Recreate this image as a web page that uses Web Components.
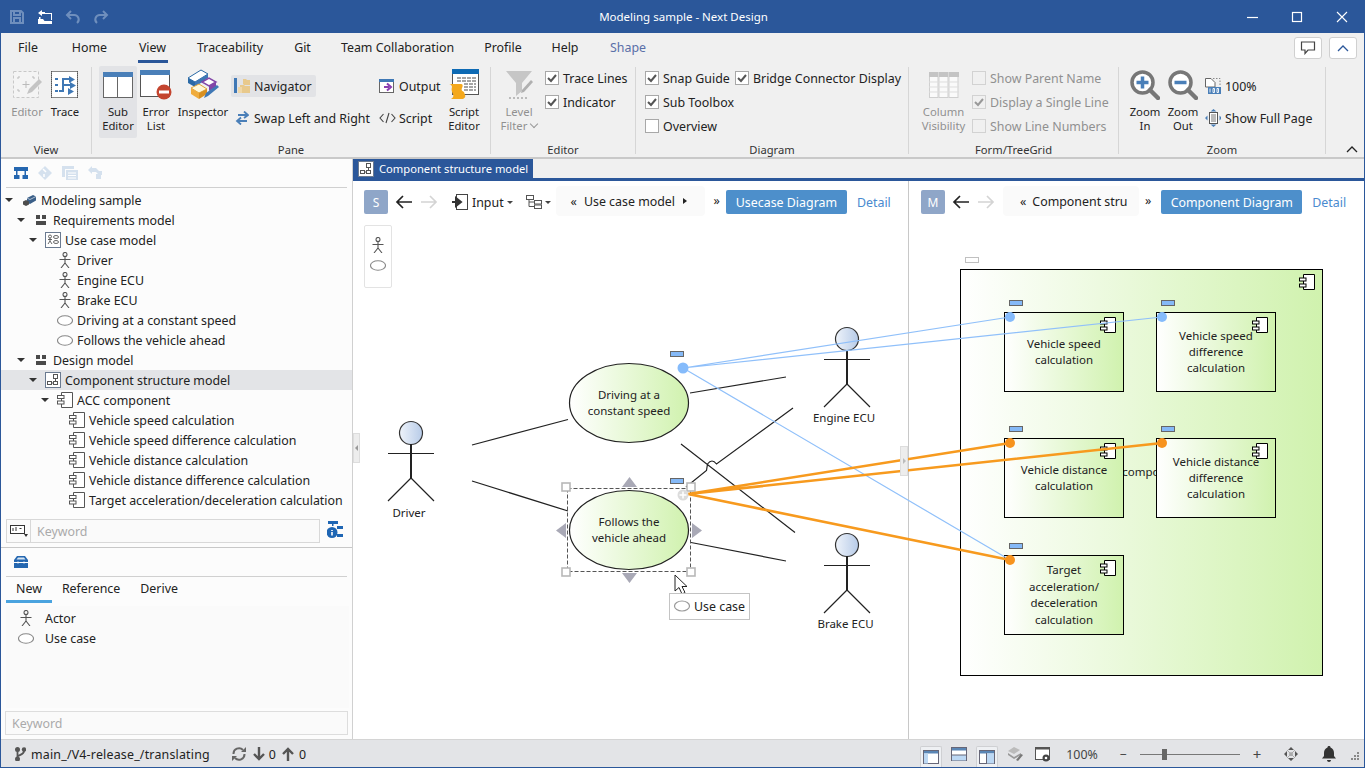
<!DOCTYPE html>
<html lang="en"><head><meta charset="utf-8"><title>Modeling sample - Next Design</title>
<style>
html,body{margin:0;padding:0;background:#fff;overflow:hidden}
body{font:12.4px "Noto Sans","Liberation Sans",sans-serif;color:#222}
</style></head><body>
<app-window>
  <title-bar slot="title">Modeling sample - Next Design</title-bar>
  <ribbon-bar slot="ribbon">
    <rb-group w="91" pl="7" label="View">
      <rb-large w="38" icon="editor" off>Editor</rb-large>
      <rb-large w="38" icon="trace">Trace</rb-large>
    </rb-group>
    <rb-group w="399" pl="7" label="Pane">
      <rb-large w="38" icon="subeditor" on>Sub<br>Editor</rb-large>
      <rb-large w="38" icon="errorlist">Error<br>List</rb-large>
      <rb-large w="56" icon="inspector">Inspector</rb-large>
      <rb-col w="145"><rb-small icon="navigator" on>Navigator</rb-small><rb-small icon="swap">Swap Left and Right</rb-small></rb-col>
      <rb-col w="68"><rb-small icon="output">Output</rb-small><rb-small icon="script">Script</rb-small></rb-col>
      <rb-large w="40" icon="scripteditor">Script<br>Editor</rb-large>
    </rb-group>
    <rb-group w="145" pl="9" label="Editor">
      <rb-large w="38" icon="filter" off caret>Level<br>Filter</rb-large>
      <rb-checks cols="auto" ml="7"><rb-check checked>Trace Lines</rb-check><rb-check checked>Indicator</rb-check></rb-checks>
    </rb-group>
    <rb-group w="273" pl="9" label="Diagram">
      <rb-checks cols="90px auto"><rb-check checked>Snap Guide</rb-check><rb-check checked>Bridge Connector Display</rb-check><rb-check checked>Sub Toolbox</rb-check><span></span><rb-check>Overview</rb-check></rb-checks>
    </rb-group>
    <rb-group w="210" pl="6" label="Form/TreeGrid">
      <rb-large w="57" icon="columns" off>Column<br>Visibility</rb-large>
      <rb-checks cols="auto"><rb-check off>Show Parent Name</rb-check><rb-check off checked>Display a Single Line</rb-check><rb-check off>Show Line Numbers</rb-check></rb-checks>
    </rb-group>
    <rb-group w="207" pl="7" label="Zoom">
      <rb-large w="38" icon="zoomin">Zoom<br>In</rb-large>
      <rb-large w="38" icon="zoomout">Zoom<br>Out</rb-large>
      <rb-col w="120"><rb-small icon="page100">100%</rb-small><rb-small icon="fullpage">Show Full Page</rb-small></rb-col>
    </rb-group>
  </ribbon-bar>
  <nav-panel slot="left">
    <tree-row slot="tree" d="0" icon="project" arrow>Modeling sample</tree-row>
    <tree-row slot="tree" d="1" icon="package" arrow>Requirements model</tree-row>
    <tree-row slot="tree" d="2" icon="ucmodel" arrow>Use case model</tree-row>
    <tree-row slot="tree" d="3" icon="actor">Driver</tree-row>
    <tree-row slot="tree" d="3" icon="actor">Engine ECU</tree-row>
    <tree-row slot="tree" d="3" icon="actor">Brake ECU</tree-row>
    <tree-row slot="tree" d="3" icon="oval">Driving at a constant speed</tree-row>
    <tree-row slot="tree" d="3" icon="oval">Follows the vehicle ahead</tree-row>
    <tree-row slot="tree" d="1" icon="package" arrow>Design model</tree-row>
    <tree-row slot="tree" d="2" icon="cmodel" arrow selected>Component structure model</tree-row>
    <tree-row slot="tree" d="3" icon="comp" arrow>ACC component</tree-row>
    <tree-row slot="tree" d="4" icon="comp">Vehicle speed calculation</tree-row>
    <tree-row slot="tree" d="4" icon="comp">Vehicle speed difference calculation</tree-row>
    <tree-row slot="tree" d="4" icon="comp">Vehicle distance calculation</tree-row>
    <tree-row slot="tree" d="4" icon="comp">Vehicle distance difference calculation</tree-row>
    <tree-row slot="tree" d="4" icon="comp">Target acceleration/deceleration calculation</tree-row>
  </nav-panel>
  <editor-area slot="main"></editor-area>
  <status-bar slot="status"></status-bar>
</app-window>
<script>
const ICONS={
save:[16,16,'<g fill="none" stroke="#6f8fbd" stroke-width="2"><path d="M2 2h10l2 2v10H2z"/><path d="M5 2v4h6V2M5 14V9h6v5"/></g>'],
open:[16,16,'<g fill="#fff"><path d="M1 10h5l1.500 2H15v3H1z"/><path d="M8 4h7v7h-1V5H8z"/><path d="M1 4l4-3v2h3v2H5v2z"/><rect x="2" y="8" width="1.500" height="2"/></g>'],
undo:[16,16,'<path d="M6 2L2 6l4 4M2 6h7a4.500 4.500 0 0 1 3 8" fill="none" stroke="#6f8fbd" stroke-width="2"/>'],
redo:[16,16,'<path d="M10 2l4 4-4 4M14 6H7a4.500 4.500 0 0 0-3 8" fill="none" stroke="#6f8fbd" stroke-width="2"/>'],
min:[12,12,'<path d="M1 6.500h11" stroke="#fff" stroke-width="1.200"/>'],
max:[12,12,'<rect x="1.500" y="1.500" width="9" height="9" fill="none" stroke="#fff" stroke-width="1.200"/>'],
close:[12,12,'<path d="M1 1l10 10M11 1L1 11" stroke="#fff" stroke-width="1.100"/>'],
editor:[30,30,'<rect x="1.500" y="1.500" width="25" height="26" fill="#f4f4f4" stroke="#c8c8c8" stroke-dasharray="3 2"/><path d="M8 7H6v2M20 7h2v2M8 21H6v-2M14 11v7M10.500 14.500h7" fill="none" stroke="#bbb"/><path d="M15 24l2-5L27 9l3 3-10 10z" fill="#c4c4c4"/>'],
trace:[28,28,'<rect x=".5" y=".5" width="26" height="26" fill="#fff" stroke="#888"/><path d="M.5 0v27M26.500 0v27" stroke="#555" stroke-dasharray="1 1"/><g fill="none" stroke="#3f78b5" stroke-width="2" stroke-dasharray="3 1"><path d="M4 8h3M4 14h3M4 20h3"/></g><g fill="none" stroke="#3f78b5" stroke-width="2"><path d="M8 20h4V8h6M12 14h7"/></g><path d="M18 5l6 3.500-6 3.500zM19 11l6 3.500-6 3.500zM17 17l6 3.500-6 3.500z" fill="#3f78b5"/>'],
subeditor:[30,26,'<rect x=".5" y=".5" width="29" height="25" fill="#fff" stroke="#666"/><rect width="30" height="5" fill="#4a7fb8"/><path d="M14.500 5v20" stroke="#666"/>'],
errorlist:[32,30,'<rect x=".5" y=".5" width="29" height="26" fill="#fff" stroke="#555"/><rect width="30" height="5" fill="#4a7fb8"/><circle cx="24" cy="22" r="7.500" fill="#c4452f"/><rect x="19" y="20.500" width="10" height="3" fill="#fff"/>'],
inspector:[32,32,'<path d="M1 9L14 1l7 4L8 13z" fill="#fff" stroke="#2b6aa6"/><path d="M1 9l7 4v5L1 14z" fill="#2b6aa6"/><path d="M8 13L21 5v4L8 18z" fill="#3f78b5"/><path d="M15 13l7-4 7 4-7 4z" fill="#fff" stroke="#8246a8" stroke-width="1.500"/><path d="M22 17l7-4v5l-7 4z" fill="#8246a8"/><path d="M4 19l8-4 8 5-8 4z" fill="#fff8d8" stroke="#e0a53a"/><path d="M4 19v6l8 5v-6z" fill="#f0ac3c"/><path d="M12 24l8-4v5l-8 5z" fill="#d99020"/><path d="M17 29l2-5 11-8 2 2-11 9z" fill="#3f78b5"/>'],
navigator:[16,18,'<rect x="0" y="1" width="3" height="15" fill="#3f78b5"/><path d="M6 8h4l1 1h5v7H6z" fill="#e8c98c"/><path d="M9 2h3l1 1h3v5h-6l-1-1z" fill="#e8c98c"/><path d="M4 10h4v6H4z" fill="#f0d8a8"/>'],
swap:[14,14,'<path d="M2 5h9M8 1.500L12 5 8 8" fill="none" stroke="#4a7fb8" stroke-width="1.800" transform="translate(1 -1)"/><path d="M12 10H3M6 6.500L2 10l4 3.500" fill="none" stroke="#4a7fb8" stroke-width="1.800"/>'],
output:[16,14,'<rect x=".5" y=".5" width="14" height="13" fill="#fff" stroke="#666"/><rect width="15" height="3" fill="#3f78b5"/><path d="M5 8h5M8 4.500L12 8l-4 3.500" fill="none" stroke="#8a3fb0" stroke-width="2"/>'],
script:[17,12,'<path d="M4.500 2L1 6l3.500 4M12.500 2L16 6l-3.500 4M10 1L7 11" fill="none" stroke="#444" stroke-width="1.100"/>'],
scripteditor:[32,32,'<rect x="4.500" y=".5" width="26" height="25" fill="#fff" stroke="#555"/><rect x="4" width="27" height="5" fill="#0e6ab4"/><g stroke="#888" stroke-width="1.500" stroke-dasharray="4 1"><path d="M9 9h19M9 12h19M16 15h12M16 18h12M16 21h12"/></g><path d="M1 15h12c2 0 2 2 1 4s0 3 2 4l1 3c1 2-1 4-3 4H3c2-1 3-3 2-5s-2-4-1-7c0-1-1-3-3-3z" fill="#f4a81c"/>'],
filter:[28,30,'<path d="M1 1h26L17 13v8l-6 5V13z" fill="#c6c6c6"/><path d="M17 20l9-10 2 2-9 10-3 1z" fill="#b0b0b0"/><path d="M4 28h18" stroke="#bbb" stroke-dasharray="2 2" stroke-width="2"/>'],
columns:[30,26,'<g fill="#fafafa" stroke="#cfcfcf"><rect x=".5" y=".5" width="8.500" height="25"/><rect x="10" y=".5" width="9" height="25"/><rect x="20" y=".5" width="9" height="25"/></g><g fill="#c4c4c4"><rect width="9" height="5"/><rect x="10" width="9" height="5"/><rect x="20" width="10" height="5"/></g><path d="M0 10h30M0 15h30M0 20h30" stroke="#ddd"/>'],
zoomin:[30,30,'<circle cx="12.500" cy="12.500" r="10.500" fill="#fff" stroke="#777" stroke-width="3.500"/><path d="M20 20l8 8" stroke="#777" stroke-width="4.500" stroke-linecap="round"/><path d="M6.500 12.500h12M12.500 6.500v12" stroke="#4a7fb8" stroke-width="3.500"/>'],
zoomout:[30,30,'<circle cx="12.500" cy="12.500" r="10.500" fill="#fff" stroke="#777" stroke-width="3.500"/><path d="M20 20l8 8" stroke="#777" stroke-width="4.500" stroke-linecap="round"/><path d="M6.500 12.500h12" stroke="#4a7fb8" stroke-width="3.500"/>'],
page100:[16,16,'<path d="M.5.500H6l4 4V9H.5z" fill="#fff" stroke="#666"/><path d="M8 .5h7v8" fill="none" stroke="#888" stroke-dasharray="1.500 1.500"/><rect x="3" y="9" width="13" height="7" fill="#4a7fb8"/><path d="M5 10.500v4M8 10.500h1.500v4H8zM12 10.500h1.500v4H12z" fill="none" stroke="#fff" stroke-width=".9"/>'],
fullpage:[16,18,'<rect x="4.500" y="3.500" width="8" height="11" fill="#fff" stroke="#555"/><path d="M6 6h5M6 8h5M6 10h5M6 12h5" stroke="#777"/><g fill="#4a7fb8"><path d="M8.500 0l3 2.500h-6zM8.500 18l3-2.500h-6zM0 9l2.500-2.500v5zM17 9l-2.500-2.500v5z"/></g>'],
navtree:[14,12,'<g fill="#2567b0"><rect width="14" height="4"/><rect y="8" width="5.500" height="4"/><rect x="8.500" y="8" width="5.500" height="4"/><path d="M2 3h1.500v6H2zM10.500 3H12v6h-1.500z"/></g>'],
navdiamond:[14,14,'<path d="M7 0l7 7-7 7-7-7z" fill="#d5e1ee"/><path d="M5 3l3 3M6 8v3" stroke="#fff" stroke-width="1.500"/>'],
navdocs:[16,14,'<path d="M0 0h12v3H3v8H0z" fill="#d5e1ee"/><rect x="4" y="4" width="12" height="10" fill="#d5e1ee"/><path d="M6 7h8M6 9.500h8M6 12h8" stroke="#fff"/>'],
navarrows:[14,14,'<path d="M0 4l4-4v2h4l3 3h3v4l-3 0-3-3H4v2z" fill="#d5e1ee"/><rect x="8" y="8" width="5" height="5" fill="#d5e1ee"/>'],
project:[14,11,'<path d="M5 3l6-3 3 1.500v4L8 9 5 7.500z" fill="#3a5f88"/><path d="M5 3l3 1.500 6-3" fill="none" stroke="#fff" stroke-width=".6"/><path d="M1 6.500l3-1.500 3 1.500v3L4 11 1 9.500z" fill="#4d4d4d"/>'],
package:[10,10,'<g fill="#4a4a4a"><rect width="4" height="4"/><rect x="6" width="4" height="4"/><rect y="6" width="10" height="4"/></g>'],
ucmodel:[16,16,'<rect x=".5" y=".5" width="15" height="15" fill="#fff" stroke="#6a7a90"/><g fill="none" stroke="#555" stroke-width=".9"><circle cx="5" cy="4.500" r="1.500"/><path d="M5 6v3M3 7.500h4M5 9l-2 3M5 9l2 3"/><ellipse cx="11" cy="5" rx="2.500" ry="1.500"/><ellipse cx="11" cy="10" rx="2.500" ry="1.500"/></g>'],
cmodel:[16,16,'<rect x=".5" y=".5" width="15" height="15" fill="#fff" stroke="#6a7a90"/><g fill="#fff" stroke="#555"><rect x="8.500" y="2.500" width="4" height="4"/><rect x="2.500" y="9.500" width="4" height="3"/><rect x="8.500" y="9.500" width="4" height="3"/><path d="M10.500 6.500v3M6.500 11h2" fill="none"/></g>'],
actor:[12,16,'<g fill="none" stroke="#555" stroke-width="1.100"><circle cx="6" cy="2.500" r="2"/><path d="M6 4.500v6.500M.5 7.500h11M6 11l-4 5M6 11l4 5"/></g>'],
oval:[16,11,'<ellipse cx="8" cy="5.500" rx="7.500" ry="4.800" fill="#fff" stroke="#888" stroke-width="1.100"/>'],
comp:[16,16,'<path d="M4.500 .5h11v15h-11z" fill="#fff" stroke="#555"/><rect x=".5" y="3.500" width="6.500" height="3" fill="#fff" stroke="#555"/><rect x=".5" y="9" width="6.500" height="3" fill="#fff" stroke="#555"/>'],
abc:[18,12,'<rect x=".5" y=".5" width="14" height="8" fill="#fff" stroke="#333"/><path d="M14 9h4l-2 3z" fill="#333"/><path d="M3 3v3M6 2v4M9.500 3.500h2" stroke="#333"/>'],
infotree:[16,17,'<g fill="#1f66b4"><rect x="1" width="10" height="3"/><rect x="5" y="2" width="1.500" height="3"/><circle cx="5" cy="11.500" r="5.500"/><rect x="10" y="5" width="6" height="3"/><rect x="10" y="13" width="6" height="3"/></g><path d="M5 9v1M5 11v3.500" stroke="#fff" stroke-width="1.600"/>'],
toolbox:[14,12,'<path d="M3 0h8l3 4v8H0V4z" fill="#2567b0"/><path d="M4 1.500h6l1.500 2h-9z" fill="#d6e5f3"/><path d="M0 6.500h14" stroke="#fff"/><path d="M4 5.500v2M10 5.500v2" stroke="#fff"/>'],
inputic:[16,16,'<rect x="4.500" y=".5" width="11" height="15" fill="#fff" stroke="#444"/><path d="M0 8h5M4 4l5 4-5 4z" fill="#333" stroke="#333" stroke-width="2"/>'],
treeic:[16,14,'<g fill="#fff" stroke="#555"><rect x=".5" y=".5" width="7" height="4"/><rect x="8.500" y="5.500" width="7" height="3.500"/><rect x="8.500" y="10" width="7" height="3.500"/><path d="M3 4.500v7h5M3 7h5" fill="none"/></g>'],
arrowL:[18,14,'<path d="M17 7H2M8 1L2 7l6 6" fill="none" stroke="#222" stroke-width="1.700"/>'],
arrowR:[18,14,'<path d="M1 7h15M10 1l6 6-6 6" fill="none" stroke="#d4d4d4" stroke-width="1.700"/>'],
branch:[11,14,'<g fill="#555"><circle cx="2.500" cy="2.500" r="2.500"/><circle cx="2.500" cy="12" r="2.500"/><circle cx="9" cy="2.500" r="2.200"/></g><path d="M2.500 3v8M9 4c0 3-3 3.500-6 5" fill="none" stroke="#555" stroke-width="1.800"/>'],
sync:[14,14,'<g fill="none" stroke="#666" stroke-width="2"><path d="M1.500 7A5.500 5.500 0 0 1 11 3"/><path d="M12.500 7A5.500 5.500 0 0 1 3 11"/></g><path d="M14 0v5H9zM0 14V9h5z" fill="#666"/>'],
down:[12,14,'<path d="M6 0v12M1 7l5 5 5-5" fill="none" stroke="#555" stroke-width="2.400"/>'],
up:[12,14,'<path d="M6 14V2M1 7l5-5 5 5" fill="none" stroke="#555" stroke-width="2.400"/>'],
layA:[16,14,'<rect x=".5" y=".5" width="15" height="13" fill="#fff" stroke="#667"/><rect x="1" y="1" width="14" height="2.500" fill="#5a86b5"/><rect x="1" y="3.500" width="4" height="10" fill="#bcd8f4"/>'],
layB:[16,14,'<rect x=".5" y=".5" width="15" height="13" fill="#fff" stroke="#667"/><rect x="1" y="1" width="14" height="2.500" fill="#5a86b5"/><rect x="1" y="8" width="14" height="5.500" fill="#bcd8f4"/><path d="M1 8h14" stroke="#667"/>'],
layC:[16,14,'<rect x=".5" y=".5" width="15" height="13" fill="#fff" stroke="#667"/><rect x="1" y="1" width="14" height="2.500" fill="#5a86b5"/><rect x="8" y="3.500" width="7" height="10" fill="#bcd8f4"/><path d="M7.500 3v10" stroke="#667"/>'],
insSm:[16,16,'<path d="M1 5l6-4 6 3-6 4z" fill="#bbb"/><path d="M1 7l6 4 7-4v2l-7 4-6-4z" fill="#999"/><path d="M9 14l5-6 2 1-5 6z" fill="#777"/>'],
settingsSm:[16,15,'<rect x=".5" y=".5" width="14" height="12" fill="#fff" stroke="#555"/><rect width="15" height="2.500" fill="#555"/><circle cx="11" cy="11" r="3.500" fill="#444"/><circle cx="11" cy="11" r="1.300" fill="#fff"/>'],
moveic:[14,14,'<g fill="#555"><path d="M7 0l3 3H4zM7 14l3-3H4zM0 7l3-3v6zM14 7l-3-3v6z"/><circle cx="7" cy="7" r="1.500"/></g><path d="M3 3l8 8M11 3l-8 8" stroke="#aaa"/>'],
bell:[14,16,'<path d="M7 0c1 0 1.500.5 1.500 1.500C11 2.500 12 4.500 12 7v3l2 2.500H0L2 10V7c0-2.500 1-4.500 3.500-5.500C5.500.5 6 0 7 0z" fill="#333"/><path d="M5 14h4c0 1-1 2-2 2s-2-1-2-2z" fill="#333"/>'],
grip:[10,10,'<g fill="#888"><rect x="7" width="2" height="2"/><rect x="4" y="3" width="2" height="2"/><rect x="7" y="3" width="2" height="2"/><rect x="1" y="6" width="2" height="2"/><rect x="4" y="6" width="2" height="2"/><rect x="7" y="6" width="2" height="2"/></g>'],
chat:[16,14,'<path d="M1.500 1h13v8H8l-3 3.500V9H1.500z" fill="#fff" stroke="#444" stroke-width="1.200"/>'],
chevUp:[12,7,'<path d="M1 6l5-5 5 5" fill="none" stroke="#2b579a" stroke-width="1.300"/>'],
chevUpK:[12,7,'<path d="M1 6l5-5 5 5" fill="none" stroke="#222" stroke-width="1.300"/>']
};
const H=(n,c)=>customElements.define(n,c);
class Base extends HTMLElement{
  render(html){const s=this.shadowRoot||this.attachShadow({mode:'open'});s.innerHTML=html;return s}
  attr(n,d){return this.hasAttribute(n)?this.getAttribute(n):d}
}
const ic=(n,extra='')=>`<x-ic n="${n}" style="${extra}"></x-ic>`;
H('x-ic',class extends Base{connectedCallback(){
  const [w,h,b]=ICONS[this.getAttribute('n')];
  this.render(`<style>:host{display:inline-flex;flex:none;width:${w}px;height:${h}px}svg{display:block}</style><svg xmlns="http://www.w3.org/2000/svg" width="${w}" height="${h}" viewBox="0 0 ${w} ${h}">${b}</svg>`);
}});
H('app-window',class extends Base{connectedCallback(){this.render(`<style>
:host{display:flex;flex-direction:column;width:1365px;height:768px;box-sizing:border-box;border:1px solid #2b579a;border-top:0;background:#fff;position:relative;overflow:hidden}
.main{flex:1;display:flex;min-height:0}
</style><slot name="title"></slot><slot name="ribbon"></slot><div class="main"><slot name="left"></slot><slot name="main"></slot></div><slot name="status"></slot>`)}});
H('title-bar',class extends Base{connectedCallback(){this.render(`<style>
:host{display:grid;grid-template-columns:1fr auto 1fr;align-items:center;height:33px;background:#2b579a;color:#fff;font-size:11.5px;margin:0 -1px}
.l{display:flex;align-items:center;padding-left:9px;padding-top:1px}.l x-ic{margin-right:12px}
.r{display:flex;justify-content:flex-end;align-items:center;padding-right:17px}.r x-ic{margin-left:33px}
.t{padding-top:0;margin-left:2px}
</style><div class="l">${ic('save')}${ic('open')}${ic('undo')}${ic('redo')}</div><div class="t"><slot></slot></div><div class="r">${ic('min')}${ic('max')}${ic('close')}</div>`)}});
H('ribbon-bar',class extends Base{connectedCallback(){
const tabs=[['File',54],['Home',69],['View',57,1],['Traceability',98],['Git',47],['Team Collaboration',143],['Profile',68],['Help',56],['Shape',70,2]];
this.render(`<style>
:host{display:block;height:126px;box-sizing:border-box;background:#f0f0f0;border-bottom:2px solid #c9c9c9;position:relative;color:#222}
.tabs{display:flex;height:33px}
.tab{display:flex;flex-direction:column;align-items:center;height:33px;line-height:29px;box-sizing:border-box;position:relative}
.tab i{position:absolute;left:50%;margin-left:-15px;width:30px;top:27px;height:3px;background:#2b579a}
.tab.s{color:#5a6fa8}
.groups{display:flex;height:92px}
.fb{position:absolute;top:4px;right:7px;display:flex;gap:7px}
.fb span{display:flex;align-items:center;justify-content:center;width:26px;height:20px;background:#fff;border:1px solid #d0d0d0;border-radius:3px}
.col{position:absolute;right:6px;bottom:4px;display:flex}
</style><div class="tabs">${tabs.map(t=>`<div class="tab ${t[2]==2?'s':''}" style="width:${t[1]}px">${t[0]}${t[2]==1?'<i></i>':''}</div>`).join('')}</div>
<div class="groups"><slot></slot></div>
<div class="fb"><span>${ic('chat')}</span><span>${ic('chevUp')}</span></div><div class="col">${ic('chevUpK')}</div>`)}});
H('rb-group',class extends Base{connectedCallback(){this.render(`<style>
:host{display:flex;flex-direction:column;flex:none;box-sizing:border-box;width:${this.attr('w')}px;height:87px;margin-top:1px;border-right:1px solid #d6d6d6;padding-left:${this.attr('pl')}px}
.c{display:flex;flex:1;margin-top:-1px}
.l{height:14px;line-height:14px;margin:0 0 -3px -${this.attr('pl')}px;text-align:center;font-size:11.2px;color:#333}
</style><div class="c"><slot></slot></div><div class="l">${this.attr('label')}</div>`)}});
H('rb-large',class extends Base{connectedCallback(){const off=this.hasAttribute('off'),on=this.hasAttribute('on'),cr=this.hasAttribute('caret');this.render(`<style>
:host{display:flex;flex-direction:column;align-items:center;flex:none;width:${this.attr('w')}px;height:72px;box-sizing:border-box;border-radius:2px;${on?'background:#e2e3e6;':''}${off?'color:#909090;':''}font-size:11.3px}
.i{height:39px;display:flex;align-items:center;justify-content:center;padding-bottom:1px;box-sizing:border-box}
.t{line-height:14px;text-align:center;white-space:nowrap}
.cr{display:inline-block;width:5px;height:5px;border:solid #999;border-width:0 1px 1px 0;transform:rotate(45deg);margin:0 0 3px 4px}
</style><div class="i">${ic(this.attr('icon'))}</div><div class="t"><slot></slot>${cr?'<span class="cr"></span>':''}</div>`)}});
H('rb-col',class extends Base{connectedCallback(){this.render(`<style>:host{display:flex;flex-direction:column;align-items:flex-start;flex:none;width:${this.attr('w')}px;padding-top:9px;gap:10px;box-sizing:border-box}</style><slot></slot>`)}});
H('rb-small',class extends Base{connectedCallback(){const on=this.hasAttribute('on');this.render(`<style>
:host{display:flex;align-items:center;height:22px;padding:0 4px 0 3px;border-radius:2px;white-space:nowrap;${on?'background:#e2e3e6;':''}}
.i{width:16px;display:flex;justify-content:center;margin-right:4px}
.i x-ic{flex:none}
</style><span class="i">${ic(this.attr('icon'))}</span><slot></slot>`)}});
H('rb-checks',class extends Base{connectedCallback(){this.render(`<style>:host{display:grid;grid-template-columns:${this.attr('cols')};grid-auto-rows:24px;align-content:start;margin-left:${this.attr('ml','0')}px}</style><slot></slot>`)}});
H('rb-check',class extends Base{connectedCallback(){const off=this.hasAttribute('off'),ch=this.hasAttribute('checked');this.render(`<style>
:host{display:flex;align-items:center;white-space:nowrap;${off?'color:#909090;':''}}
.b{width:12px;height:12px;border:1px solid ${off?'#d2d2d2':'#a8a8a8'};background:${off?'#f0f0f0':'#fff'};margin-right:4px;display:flex}
</style><span class="b">${ch?`<svg width="12" height="12" viewBox="0 0 12 12"><path d="M2 6l3 3 5-6" fill="none" stroke="${off?'#999':'#555'}" stroke-width="2"/></svg>`:''}</span><slot></slot>`)}});
H('nav-panel',class extends Base{connectedCallback(){this.render(`<style>
:host{display:flex;flex-direction:column;width:351px;flex:none;background:#fcfcfc;border-right:1px solid #d0d0d0;position:relative}
.bar{height:28px;margin:0 5px;border-bottom:1px solid #d0d0d0;display:flex;align-items:center;gap:10px;padding-left:8px;box-sizing:content-box}
.tree{height:329px;padding-top:2px}
.srow{display:flex;align-items:center;height:24px;margin:0 0 0 5px;box-sizing:border-box}
.s{display:flex;align-items:center;width:314px;height:24px;box-sizing:border-box;border:1px solid #d8d8d8;background:#fafafa;color:#aaa}
.s .a{width:23px;height:22px;display:flex;align-items:center;justify-content:center;border-right:1px solid #d8d8d8;margin-right:6px}
.info{margin-left:7px}
.split{height:1px;background:#c8c8c8}
.tb{height:28px;margin:0 5px;border-bottom:1px solid #d0d0d0;display:flex;align-items:center;padding-left:8px}
.tabs{display:flex;height:26px;margin-left:5px;position:relative}
.tabs span{display:flex;align-items:center;height:23px}
.tabs i{position:absolute;left:0;top:23px;width:46px;height:3px;background:#4aa3df}
.list{margin:3px 3px 0 5px;height:102px;background:#fafafa;padding-top:2px;box-sizing:border-box}
.li{display:flex;align-items:center;height:20px}.li .x{width:39px;display:flex;justify-content:center}
.key{display:flex;align-items:center;height:24px;margin:3px 4px 0 4px;border:1px solid #ddd;box-sizing:border-box;color:#aaa;padding-left:6px;background:#fafafa}
</style>
<div class="bar">${ic('navtree')}${ic('navdiamond')}${ic('navdocs')}${ic('navarrows')}</div>
<div class="tree"><slot name="tree"></slot></div>
<div class="srow"><div class="s"><span class="a">${ic('abc')}</span>Keyword</div><span class="info">${ic('infotree')}</span></div>
<div class="split" style="margin-top:4px"></div>
<div class="tb">${ic('toolbox')}</div>
<div class="tabs"><span style="margin-left:10px">New</span><span style="margin-left:20px">Reference</span><span style="margin-left:20px">Derive</span><i></i></div>
<div class="list"><div class="li"><span class="x">${ic('actor')}</span>Actor</div><div class="li"><span class="x">${ic('oval')}</span>Use case</div></div>
<div class="key">Keyword</div>`)}});
H('tree-row',class extends Base{connectedCallback(){const d=+this.attr('d',0),sel=this.hasAttribute('selected'),ar=this.hasAttribute('arrow');this.render(`<style>
:host{display:flex;align-items:center;height:20px;padding-left:${12*d}px;white-space:nowrap;color:#222;${sel?'background:#e3e4e7;':''}}
.a{width:16px;height:20px;display:flex;align-items:center;justify-content:center;flex:none}
.a i{width:0;height:0;border:4px solid transparent;border-top:4px solid #333;border-bottom:0;border-left-width:4.5px;border-right-width:4.5px}
.i{width:24px;display:flex;justify-content:center;flex:none}
</style><span class="a">${ar?'<i></i>':''}</span><span class="i">${ic(this.attr('icon'))}</span><slot></slot>`)}});
H('editor-area',class extends Base{connectedCallback(){this.render(`<style>
:host{display:flex;flex-direction:column;flex:1;min-width:0;position:relative}
.tabs{height:19px;background:#f0f0f0;display:flex;flex:none}
.tab{display:flex;align-items:center;background:#2b579a;color:#fff;padding:0 5px 0 5px;height:19px;gap:5px;font-size:11.2px;white-space:nowrap}
.tab x-ic{background:#fff}
.line{height:3px;background:#2b579a;flex:none}
.body{flex:1;display:flex;position:relative;min-height:0}
.trace{position:absolute;left:0;top:0;width:1011px;height:558px;pointer-events:none}
.h{position:absolute;width:7px;height:30px;background:#ededed;border:1px solid #ddd;box-sizing:border-box;display:flex;align-items:center;justify-content:center}
.h i{border:3px solid transparent}
</style>
<div class="tabs"><div class="tab">${ic('cmodel')}Component structure model</div></div><div class="line"></div>
<div class="body"><editor-pane w="556" badge="S" crumb="Use case model" btn="Usecase Diagram" kind="left"></editor-pane><editor-pane w="455" badge="M" crumb="Component stru" btn="Component Diagram" kind="right"></editor-pane>
<svg class="trace" viewBox="353 181 1011 558">
<g fill="none" stroke="#90c0fa" stroke-width="1.200"><path d="M683 368L1010 317M683 368L1162 317M683 368L1010 560"/></g>
<circle cx="683" cy="368" r="5.500" fill="#85bbfb"/><circle cx="1010" cy="317" r="5" fill="#85bbfb"/><circle cx="1162" cy="317" r="5" fill="#85bbfb"/>
<g fill="none" stroke="#f79a1e" stroke-width="2.600"><path d="M688 494L1010 443M688 494L1162 443M688 494L1010 560"/></g>
<circle cx="1010" cy="443" r="5" fill="#f7931e"/><circle cx="1162" cy="443" r="5" fill="#f7931e"/><circle cx="1010" cy="560" r="5" fill="#f7931e"/>
<circle cx="683" cy="495" r="5.500" fill="#dcdcdc"/><path d="M679.500 495h7M683 491.500v7" stroke="#fff" stroke-width="1.500"/>
</svg>
<div class="h" style="left:0;top:252px"><i style="border-right-color:#999;margin-left:-3px"></i></div>
<div class="h" style="left:547px;top:265px;width:8px"><i style="border-left-color:#bbb;margin-right:-3px"></i></div>
</div>`)}});
const actor=(cx,y,label,lx,dy=0)=>`<circle cx="${cx}" cy="${y}" r="11.500" fill="url(#hd)" stroke="#333" stroke-width="1.200"/><path d="M${cx} ${y+11}V${y+45}" stroke="#222" stroke-width="2"/><path d="M${cx-23} ${y+20.500}H${cx+23}M${cx} ${y+45}L${cx-23} ${y+68}M${cx} ${y+45}L${cx+23} ${y+68}" stroke="#222" stroke-width="1.200" fill="none"/><text x="${lx}" y="${y+83.500+dy}" text-anchor="middle">${label}</text>`;
const compIc=(r,t)=>`<path d="M${r-12.500} ${t+.5}h11v15h-11z" fill="#fff" stroke="#000"/><rect x="${r-16.500}" y="${t+4}" width="6.500" height="3" fill="#fff" stroke="#000"/><rect x="${r-16.500}" y="${t+10}" width="6.500" height="3" fill="#fff" stroke="#000"/>`;
const badge=(x,y,f='#85b9f7',s='#666')=>`<rect x="${x}.5" y="${y}.5" width="13" height="5" fill="${f}" stroke="${s}"/>`;
const box=(x,y,h,lines,ys)=>`<rect x="${x}.5" y="${y}.5" width="119" height="${h}" fill="url(#gr)" stroke="#000"/>${compIc(x+113,y+5)}${badge(x+5,y-12)}${lines.map((l,i)=>`<text x="${x+60}" y="${ys[i]}" text-anchor="middle">${l}</text>`).join('')}`;
const defs=`<defs><linearGradient id="gr"><stop offset="0" stop-color="#fff"/><stop offset="1" stop-color="#d0f2ae"/></linearGradient><linearGradient id="hd"><stop offset="0" stop-color="#eef3fa"/><stop offset="1" stop-color="#b7cbe8"/></linearGradient></defs>`;
H('editor-pane',class extends Base{connectedCallback(){const k=this.attr('kind');const left=k==='left';
const svg=left?`<svg class="cv" viewBox="353 181 555 558">${defs}
<g stroke="#222" stroke-width="1.200" fill="none"><path d="M472 445L568 419.500M472 481L568 511M690 393L786 377M691 542.500L786 561M681 444L795 532.500M793 408L716.500 464Q712 458 707.500 464L706.500 470.500L686 487"/></g>
${actor(411,433,'Driver',409)}${actor(847,339,'Engine ECU',844,-1)}${actor(847,545,'Brake ECU',845.5,-1)}
<ellipse cx="629" cy="403" rx="59.500" ry="39.500" fill="url(#gr)" stroke="#222" stroke-width="1.200"/><text x="629" y="399" text-anchor="middle">Driving at a</text><text x="629" y="415" text-anchor="middle">constant speed</text>
<ellipse cx="629" cy="530" rx="59.500" ry="39.500" fill="url(#gr)" stroke="#222" stroke-width="1.200"/><text x="629" y="526" text-anchor="middle">Follows the</text><text x="629" y="542" text-anchor="middle">vehicle ahead</text>
${badge(670,351)}${badge(670,478)}
<rect x="567.500" y="488.500" width="123" height="83" fill="none" stroke="#555" stroke-dasharray="4 2"/>
<g fill="#fff" stroke="#b8b8b8" stroke-width="1.600"><rect x="562" y="483" width="8" height="8"/><rect x="687" y="483" width="8" height="8"/><rect x="562" y="568" width="8" height="8"/><rect x="687" y="568" width="8" height="8"/></g>
<g fill="#a9a9b6"><path d="M629.500 477L622 487H637zM622 573H637L629.500 583zM556 530.500L566 523V538zM692 523V538L702 530.500z"/></g>
<path d="M675 575V591L679 587.500L682 594L685 592.500L682 586.500H687Z" fill="#fff" stroke="#222" stroke-width="1"/>
<rect x="669.500" y="593.500" width="80" height="26" fill="#fff" stroke="#c4c4c4"/><ellipse cx="682" cy="606" rx="7.500" ry="5" fill="#fff" stroke="#999" stroke-width="1.200"/><text x="694" y="611" font-size="12.400" fill="#222">Use case</text>
</svg>`:`<svg class="cv" viewBox="909 181 455 558">${defs}
<rect x="965.500" y="257.500" width="13" height="5" fill="#fff" stroke="#c0c0c0"/>
<rect x="960.500" y="269.500" width="362" height="406" fill="url(#gr)" stroke="#000"/>${compIc(1316,274)}
<text x="1141" y="476" text-anchor="middle">ACC component</text>
${box(1004,312,79,['Vehicle speed','calculation'],[348,364])}
${box(1156,312,79,['Vehicle speed','difference','calculation'],[340,356,372])}
${box(1004,438,79,['Vehicle distance','calculation'],[474,490])}
${box(1156,438,79,['Vehicle distance','difference','calculation'],[466,482,498])}
${box(1004,555,79,['Target','acceleration/','deceleration','calculation'],[574,591,607,624])}
</svg>`;
const bar=left?`${ic('arrowL','margin-left:7px')}${ic('arrowR','margin-left:7px')}
<span class="it" style="margin-left:14px">${ic('inputic')}<span style="margin-left:4px">Input</span><i class="cr" style="margin-left:3px"></i></span>
<span class="it" style="margin-left:13px">${ic('treeic')}<i class="cr" style="margin-left:3px"></i></span>`
:`${ic('arrowL','margin-left:7px')}${ic('arrowR','margin-left:7px')}`;
this.render(`<style>
:host{display:block;flex:none;box-sizing:border-box;width:${this.attr('w')}px;position:relative;${left?'border-right:1px solid #c8c8c8;':''}font-size:12.4px}
.cv{position:absolute;left:0;top:0;width:${left?555:455}px;height:558px;font-size:11.5px;fill:#222}
.bar{position:relative;display:flex;align-items:center;height:24px;margin-top:9px;padding-left:${left?11:12}px}
.b{width:24px;height:24px;border-radius:2px;background:#8fa6c8;color:#fff;display:flex;align-items:center;justify-content:center;flex:none;font-size:12px}
.it{display:inline-flex;align-items:center;white-space:nowrap}
.cr{width:0;height:0;border:3px solid transparent;border-top-color:#444;border-bottom:0}
.crumb{display:flex;align-items:center;height:30px;background:#fafafa;border-radius:4px;flex:none;margin-top:-2px;white-space:nowrap;box-sizing:border-box}
.crumb .tx{display:inline-block}
.btn{background:#4d8fcb;color:#fff;height:24px;display:flex;align-items:center;justify-content:center;border-radius:2px;flex:none;white-space:nowrap}
.det{color:#4a8ad0;flex:none}
.rr{flex:none;margin-top:-3px}
.tbx{position:relative;margin:11px 0 0 11px;width:28px;height:63px;border:1px solid #e3e3e3;border-radius:2px;box-sizing:border-box;background:#fff;display:flex;flex-direction:column;align-items:center;padding-top:11px;gap:7px}
</style>${svg}
<div class="bar"><span class="b">${this.attr('badge')}</span>${bar}
${left?`<span class="crumb" style="width:149px;margin-left:5px;padding-left:15px"><span>«</span><span class="tx" style="margin-left:7px">${this.attr('crumb')}</span><span style="margin-left:8px;border:3px solid transparent;border-left:4px solid #222;border-right:0"></span></span><span class="rr" style="margin-left:9px">»</span><span class="btn" style="width:121px;margin-left:6px">${this.attr('btn')}</span><span class="det" style="margin-left:10px">Detail</span>`
:`<span class="crumb" style="width:136px;margin-left:8px;padding-left:17px"><span>«</span><span class="tx" style="margin-left:6px;width:94px">${this.attr('crumb')}</span></span><span class="rr" style="margin-left:6px">»</span><span class="btn" style="width:141px;margin-left:10px">${this.attr('btn')}</span><span class="det" style="margin-left:10px">Detail</span>`}
</div>
${left?`<div class="tbx">${ic('actor')}${ic('oval')}</div>`:''}`)}});
H('status-bar',class extends Base{connectedCallback(){this.render(`<style>
:host{display:flex;align-items:center;height:28px;flex:none;background:#e3e4e7;color:#222;border-top:1px solid #d4d4d4;box-sizing:border-box;font-size:12.4px;position:relative;padding-top:1px}
.l{display:flex;align-items:center;padding-left:14px;white-space:nowrap}
.r{display:flex;align-items:center;margin-left:auto;height:100%;color:#444}
.bx{display:flex;align-items:center;justify-content:center;flex:none;height:22px}
.on{background:#eef0f3;border:1px solid #cfd0d3;border-bottom:0;border-radius:2px 2px 0 0;box-sizing:border-box;margin-top:5px;height:22px}
.sl{width:100px;height:1px;background:#777;position:relative;margin-left:8px}
.sl i{position:absolute;left:22px;top:-5px;width:5px;height:11px;background:#666}
</style>
<div class="l">${ic('branch')}<span style="margin-left:5px;letter-spacing:.2px">main_/V4-release_/translating</span>${ic('sync','margin-left:22px')}${ic('down','margin-left:7px')}<span style="margin-left:4px">0</span>${ic('up','margin-left:6px')}<span style="margin-left:5px">0</span></div>
<div class="r"><span class="bx on" style="width:22px">${ic('layA')}</span><span class="bx" style="width:22px;margin-left:6px">${ic('layB')}</span><span class="bx on" style="width:22px;margin-left:6px">${ic('layC')}</span><span class="bx" style="width:22px;margin-left:6px">${ic('insSm')}</span><span class="bx" style="width:22px;margin-left:6px">${ic('settingsSm')}</span><span class="bx" style="width:44px;margin-left:6px">100%</span><span class="bx" style="width:18px;margin-left:10px">−</span><span class="sl"><i></i></span><span class="bx" style="width:18px;margin-left:8px;font-size:15px">+</span><span class="bx" style="width:22px;margin-left:14px">${ic('moveic')}</span><span class="bx" style="width:22px;margin-left:16px">${ic('bell')}</span><span class="bx" style="width:14px;margin-left:8px;margin-right:2px;margin-top:6px">${ic('grip')}</span></div>`)}});
</script>
</body></html>
